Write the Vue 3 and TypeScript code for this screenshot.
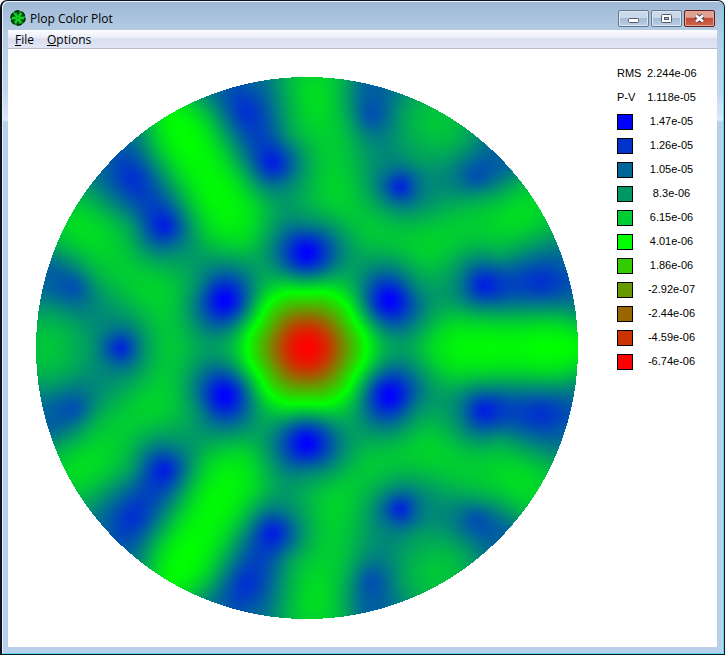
<script setup lang="ts">
import { onMounted, ref } from 'vue'

interface Level {
  color: string
  value: string
}

type Sample = [x: number, y: number, value: number]

const summary = [
  { name: 'RMS', value: '2.244e-06' },
  { name: 'P-V', value: '1.118e-05' },
]

const levels: Level[] = [
  { color: '#0000ff', value: '1.47e-05' },
  { color: '#0033cc', value: '1.26e-05' },
  { color: '#006699', value: '1.05e-05' },
  { color: '#009966', value: '8.3e-06' },
  { color: '#00cc33', value: '6.15e-06' },
  { color: '#00ff00', value: '4.01e-06' },
  { color: '#33cc00', value: '1.86e-06' },
  { color: '#669900', value: '-2.92e-07' },
  { color: '#996600', value: '-2.44e-06' },
  { color: '#cc3300', value: '-4.59e-06' },
  { color: '#ff0000', value: '-6.74e-06' },
]

const RADIUS = 271
const SIZE = RADIUS * 2

function polar(r: number, degrees: number, value: number): Sample {
  const a = (degrees * Math.PI) / 180
  return [r * Math.cos(a), r * Math.sin(a), value]
}

// Support points of the mirror cell: the surface peaks here.
const supports: Sample[] = [
  polar(95, 30, 1),
  polar(186, 60, 0.85),
  polar(186, 19.5, 0.87),
  polar(243, 15, 0.8),
  polar(239, 45, 0.67),
]

// Surface heights over one sixth of the mirror: 1 is blue, 0 green, -1 red.
const surface: Sample[] = [
  [0, 0, -1], polar(12, 0, -0.93), polar(12, 30, -0.93), polar(12, 60, -0.93),
  polar(24, 0, -0.75), polar(24, 30, -0.74), polar(24, 60, -0.75),
  polar(36, 0, -0.47), polar(36, 30, -0.45), polar(36, 60, -0.47),
  polar(48, 0, -0.22), polar(46, 30, -0.2), polar(48, 60, -0.22),
  polar(59, 0, 0), polar(59, 15, 0.01), polar(56, 30, 0.02), polar(59, 45, 0.01), polar(59, 60, 0),
  polar(72, 30, 0.5), polar(80, 30, 0.78), polar(110, 30, 0.8), polar(122, 30, 0.5),
  polar(75, 0, 0.27), polar(75, 60, 0.27), polar(90, 0, 0.37), polar(90, 60, 0.37),
  polar(110, 0, 0.3), polar(125, 0, 0.15), polar(140, 0, 0.08), polar(170, 0, 0.03),
  polar(210, 0, 0.03), polar(250, 0, 0.01), polar(271, 0, 0.03),
  [150, 25, 0.15], [180, 24, 0.16], [210, 24, 0.17], [240, 24, 0.15], [262, 28, 0.24],
  [180, 38, 0.42], [210, 38, 0.42], [240, 38, 0.4],
  polar(200, 18.5, 0.82), polar(213, 17.3, 0.75), polar(228, 16, 0.76), polar(264, 15.5, 0.74),
  polar(110, 60, 0.34), polar(134, 60, 0.21), polar(164, 60, 0.45),
  polar(214, 60, 0.42), polar(234, 60, 0.32), polar(257, 60, 0.22), polar(271, 60, 0.24),
  [268, 32, 0.4], [193, 64, 0.75], [207, 62, 0.74],
  [256, 81, 0.62], [250, 98, 0.55], [240, 111, 0.35],
  [223, 131, 0.14], [200, 135, 0.15], [180, 128, 0.19], [153, 111, 0.2],
  [126, 105, 0.17], [193, 91, 0.38], [176, 85, 0.55], [153, 65, 0.5],
  [136, 51, 0.4], [133, 78, 0.3], [116, 88, 0.22], [93, 105, 0.22],
  [93, 145, 0.55], [110, 161, 0.55], [133, 168, 0.47], [153, 168, 0.55],
  [190, 188, 0.62], [203, 181, 0.6], [213, 165, 0.3], [176, 151, 0.35],
  [160, 145, 0.32], [133, 138, 0.33], [153, 215, 0.3], [160, 201, 0.4],
  [136, 195, 0.33], [173, 206, 0.5], [153, 191, 0.45],
]

function kernel(dx: number, dy: number): number {
  const d = (dx * dx + dy * dy) / 10000
  return d > 0 ? d * Math.log(d) : 0
}

// The six images of a point under the threefold mirror symmetry.
function images(x: number, y: number): [number, number][] {
  const out: [number, number][] = []
  for (let k = 0; k < 3; k++) {
    const c = Math.cos((k * 2 * Math.PI) / 3)
    const s = Math.sin((k * 2 * Math.PI) / 3)
    out.push([c * x - s * y, s * x + c * y], [c * x + s * y, s * x - c * y])
  }
  return out
}

function solve(m: number[][], b: number[]): number[] {
  const n = b.length
  for (let i = 0; i < n; i++) {
    let p = i
    for (let r = i + 1; r < n; r++) if (Math.abs(m[r][i]) > Math.abs(m[p][i])) p = r
    ;[m[i], m[p]] = [m[p], m[i]]
    ;[b[i], b[p]] = [b[p], b[i]]
    for (let r = i + 1; r < n; r++) {
      const f = m[r][i] / m[i][i]
      for (let c = i; c < n; c++) m[r][c] -= f * m[i][c]
      b[r] -= f * b[i]
    }
  }
  const x = new Array<number>(n).fill(0)
  for (let i = n - 1; i >= 0; i--) {
    let sum = b[i]
    for (let c = i + 1; c < n; c++) sum -= m[i][c] * x[c]
    x[i] = sum / m[i][i]
  }
  return x
}

// Thin-plate spline through the samples.
function fitSurface(): (x: number, y: number) => number {
  const points = [...supports, ...surface]
  const mirrored = points.map(([x, y]) => images(x, y))
  const n = points.length
  const basis = (i: number, x: number, y: number) =>
    mirrored[i].reduce((sum, [px, py]) => sum + kernel(x - px, y - py), 0)
  const matrix = points.map(([x, y], r) => {
    const row = points.map((_, c) => basis(c, x, y))
    if (r >= supports.length) row[r] += 0.03
    return [...row, 1]
  })
  matrix.push([...new Array<number>(n).fill(1), 0])
  const weights = solve(matrix, [...points.map((p) => p[2]), 0])
  return (x, y) => {
    let sum = weights[n]
    for (let i = 0; i < n; i++) sum += weights[i] * basis(i, x, y)
    return sum
  }
}

const canvas = ref<HTMLCanvasElement | null>(null)

function paint(context: CanvasRenderingContext2D) {
  const height = fitSurface()
  const rings = 137
  const spokes = 61
  const grid = new Float32Array((rings + 1) * (spokes + 1))
  for (let i = 0; i <= rings; i++) {
    for (let j = 0; j <= spokes; j++) {
      const a = (j * Math.PI) / 180
      grid[i * (spokes + 1) + j] = height(i * 2 * Math.cos(a), i * 2 * Math.sin(a))
    }
  }
  const image = context.createImageData(SIZE, SIZE)
  for (let py = 0; py < SIZE; py++) {
    for (let px = 0; px < SIZE; px++) {
      const x = px + 0.5 - RADIUS
      const y = py + 0.5 - RADIUS
      const r = Math.hypot(x, y)
      if (r > RADIUS) continue
      let angle = (Math.abs(Math.atan2(y, x)) * 180) / Math.PI
      if (angle > 120) angle -= 120
      else if (angle > 60) angle = 120 - angle
      const i = Math.floor(r / 2)
      const j = Math.floor(angle)
      const fr = r / 2 - i
      const fa = angle - j
      const o = i * (spokes + 1) + j
      const inner = grid[o] * (1 - fa) + grid[o + 1] * fa
      const outer = grid[o + spokes + 1] * (1 - fa) + grid[o + spokes + 2] * fa
      const v = Math.max(-1, Math.min(1, inner * (1 - fr) + outer * fr))
      const at = (py * SIZE + px) * 4
      image.data[at] = v < 0 ? -v * 255 : 0
      image.data[at + 1] = (1 - Math.abs(v)) * 255
      image.data[at + 2] = v > 0 ? v * 255 : 0
      image.data[at + 3] = 255
    }
  }
  context.putImageData(image, 0, 0)
}

onMounted(() => {
  const context = canvas.value?.getContext('2d')
  if (context) paint(context)
})
</script>

<template>
  <div class="window">
    <header class="titlebar">
      <svg class="app-icon" viewBox="0 0 16 16" aria-hidden="true">
        <circle cx="8" cy="8" r="7.5" fill="#07861a" />
        <path
          d="M8 8L13.500 8M8 8L10.500 12.500M8 8L5.500 12.500M8 8L2.500 8M8 8L5 3.500M8 8L11 3.500"
          stroke="#12d822" stroke-width="2" stroke-linecap="round"
        />
        <circle cx="8" cy="8" r="7" fill="none" stroke="#02260a" stroke-width="1.500" stroke-dasharray="5 2.300" />
        <g fill="#033c10">
          <circle cx="12.500" cy="5.500" r="1" /><circle cx="12.500" cy="10.500" r="1" />
          <circle cx="8" cy="13" r="1" /><circle cx="3.500" cy="10.500" r="1" />
          <circle cx="3.500" cy="5.500" r="1" /><circle cx="8" cy="3" r="1" />
        </g>
        <circle cx="8" cy="8" r="1" fill="#3a8a10" />
      </svg>
      <h1>Plop Color Plot</h1>
      <div class="controls">
        <button type="button" class="control" aria-label="Minimize">
          <svg viewBox="0 0 29 15"><rect x="9.500" y="7.500" width="10" height="4" rx="1" fill="#fff" stroke="#535b6b" /></svg>
        </button>
        <button type="button" class="control" aria-label="Maximize">
          <svg viewBox="0 0 29 15">
            <rect x="9.500" y="3.500" width="10" height="8" rx="1" fill="#fff" stroke="#535b6b" />
            <rect x="12.500" y="6.500" width="4" height="2" fill="#9db5cf" stroke="#535b6b" />
          </svg>
        </button>
        <button type="button" class="control close" aria-label="Close">
          <svg viewBox="0 0 29 15">
            <path d="M11 4.500L18 10.500M18 4.500L11 10.500" stroke="#54404a" stroke-width="4.500" />
            <path d="M11 4.500L18 10.500M18 4.500L11 10.500" stroke="#fff" stroke-width="2.500" />
          </svg>
        </button>
      </div>
    </header>
    <div class="client">
      <nav class="menubar">
        <button type="button"><u>F</u>ile</button>
        <button type="button"><u>O</u>ptions</button>
      </nav>
      <main class="content">
        <div class="plot">
          <canvas ref="canvas" :width="SIZE" :height="SIZE" role="img" aria-label="Color plot"></canvas>
        </div>
        <table class="legend">
          <tbody>
            <tr v-for="row in summary" :key="row.name">
              <th scope="row">{{ row.name }}</th>
              <td>{{ row.value }}</td>
            </tr>
            <tr v-for="level in levels" :key="level.value">
              <th scope="row"><span class="swatch" :style="{ background: level.color }"></span></th>
              <td>{{ level.value }}</td>
            </tr>
          </tbody>
        </table>
      </main>
    </div>
  </div>
</template>

<style>
body {
  margin: 0;
  background: #fff;
}
</style>

<style scoped>
.window {
  box-sizing: border-box;
  min-height: 100vh;
  display: flex;
  flex-direction: column;
  padding: 0 7px 7px 6px;
  border: 1px solid #10151c;
  border-left-width: 2px;
  border-radius: 7px 7px 0 0;
  background: linear-gradient(#9db8d5 0, #b5cbe4 30px, #c3d5ee 90px, #dce8fa 119px, #b9d0ea 121px);
  box-shadow: inset -1px -1px 0 #55dcf0, inset 1px 1px 0 #e6f0fa;
  font-family: "Open Sans", "Noto Sans", sans-serif;
  font-size: 12px;
  color: #000;
}

.titlebar {
  display: flex;
  align-items: center;
  height: 29px;
  padding: 4px 2px 0;
  box-sizing: border-box;
}

.app-icon {
  width: 16px;
  height: 16px;
}

h1 {
  flex: 1;
  margin: 0 0 0 4px;
  padding-top: 2px;
  font-size: 12px;
  font-weight: 400;
  line-height: 16px;
}

.controls {
  display: flex;
  gap: 2px;
  padding-top: 2px;
}

.control {
  width: 31px;
  height: 17px;
  padding: 0;
  border: 1px solid #65788f;
  border-radius: 2px;
  background: linear-gradient(#c9d9ea 0 46%, #a3bad4 50%, #bdd1e8);
  box-shadow: inset 0 0 0 1px #dbe7f4;
}

.control svg {
  display: block;
  width: 29px;
  height: 15px;
}

.close {
  border-color: #5b1f24;
  background: linear-gradient(#e0a193 0 42%, #c14a35 50%, #d0674a);
  box-shadow: inset 0 0 0 1px #e3a596;
}

.client {
  flex: 1;
  display: flex;
  flex-direction: column;
  background: #fff;
}

.menubar {
  display: flex;
  height: 19px;
  box-sizing: border-box;
  border-bottom: 1px solid #b9bcc9;
  background: linear-gradient(#fdfdff, #eceff9 40%, #dadff1 50%, #e1e5f5);
}

.menubar button {
  padding: 1px 6px 0 7px;
  border: 0;
  background: none;
  font: inherit;
  line-height: 18px;
}

.content {
  flex: 1;
  display: flex;
  align-items: flex-start;
  gap: 39px;
  padding: 13px 21px 28px 28px;
}

.plot {
  flex: 1;
  padding-top: 15px;
}

canvas {
  display: block;
  width: 100%;
}

.legend {
  width: 79px;
  border-collapse: collapse;
  table-layout: fixed;
  white-space: nowrap;
  font: 11px/20px "Liberation Sans", Arial, sans-serif;
}

.legend th,
.legend td {
  box-sizing: border-box;
  height: 24px;
  padding: 0 0 2px;
  font-weight: 400;
  text-align: left;
}

.legend th {
  width: 30px;
}

.legend th:has(.swatch) {
  padding: 0;
}

.legend td {
  text-align: center;
}

.swatch {
  display: block;
  box-sizing: border-box;
  width: 16px;
  height: 16px;
  border: 1px solid #000;
}
</style>
